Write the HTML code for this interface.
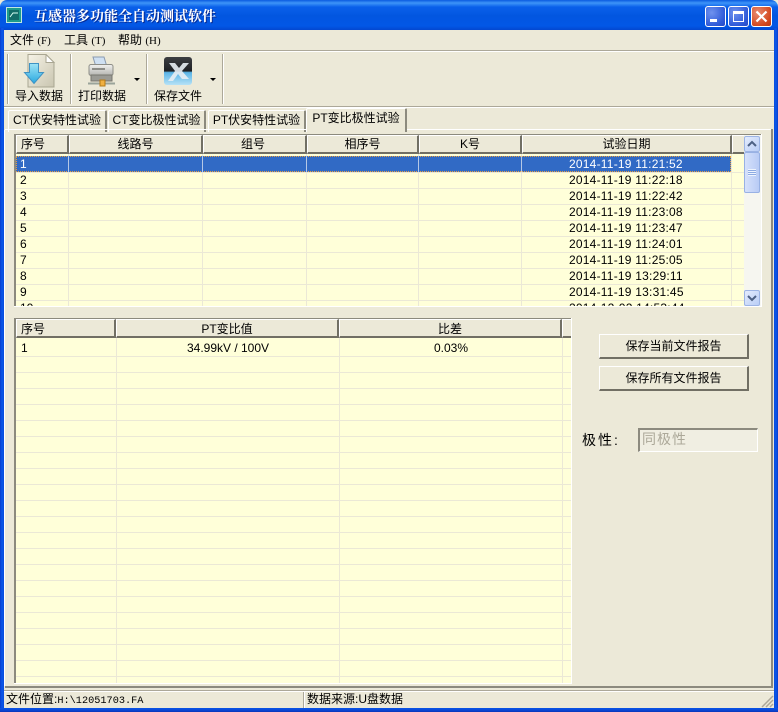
<!DOCTYPE html>
<html><head><meta charset="utf-8">
<style>
html,body{margin:0;padding:0;width:778px;height:712px;overflow:hidden;background:#ece9d8}
*{box-sizing:border-box}
body{position:relative;font:12px/16px "Liberation Sans","WenQuanYi Zen Hei","Noto Sans CJK SC",sans-serif;color:#000}
.a{position:absolute}
.t{position:absolute;white-space:nowrap}
.d{letter-spacing:.22px}
.title{left:0;top:0;width:778px;height:30px;background:linear-gradient(180deg,#0a5be0 0,#3e95f8 3px,#0a60ea 7px,#0256e0 16px,#0257e6 26px,#0347d0 30px);border-radius:7px 7px 0 0}
.hd{position:absolute;background:#ece9d8;border-top:1px solid #fff;border-left:1px solid #fff;border-right:2px solid #716f64;border-bottom:2px solid #716f64;text-align:center;line-height:17px;height:19px}
.grid{position:absolute;background:#ffffd9;overflow:hidden;border-left:2px solid #8c8a7e;border-top:1px solid #8c8a7e}
.hl{position:absolute;left:0;right:0;height:1px;background:#ebe8d6}
.vl{position:absolute;top:0;bottom:0;width:1px;background:#ebe8d6}
.tab{position:absolute;background:#ece9d8;border-top:1px solid #fff;border-left:1px solid #fff;border-right:2px solid #8c8a7e;text-align:center;line-height:19px;height:22px;border-radius:2px 2px 0 0}
.btn{position:absolute;background:#ece9d8;border-top:1px solid #fff;border-left:1px solid #fff;border-right:2px solid #716f64;border-bottom:2px solid #716f64;text-align:center;line-height:22px;width:150px;height:25px;font-size:12px}
.sep{position:absolute;width:1px;top:54px;height:50px;background:#aca899;border-right:1px solid #fff;width:2px}
.wb{position:absolute;top:6px;width:21px;height:21px;border:1px solid #fff;border-radius:3px;background:radial-gradient(circle at 30% 30%,#6f92ee,#2f5ad8 70%,#2549c4)}
.m{font:11px/16px "Liberation Serif",serif}
</style></head><body>
<div class="a title"></div>
<div class="a" style="left:0;top:28px;width:4px;height:684px;background:linear-gradient(90deg,#0a3ccc,#0a58ea 50%,#0a4cdc)"></div>
<div class="a" style="left:774px;top:28px;width:4px;height:684px;background:linear-gradient(90deg,#0a4cdc,#0a58ea 50%,#0a3ccc)"></div>
<div class="a" style="left:0;top:708px;width:778px;height:4px;background:linear-gradient(180deg,#0a55e6,#0a48d8 50%,#0a36b8)"></div>

<div class="a" style="left:6px;top:7px;width:16px;height:16px;background:#1d9b8c;border:1px solid #bfe8e0"><svg width="14" height="14" style="display:block"><rect x="2" y="2" width="10" height="10" fill="#126c68"/><path d="M3 9 L6 5 L11 5" stroke="#d8fff4" fill="none"/></svg></div>
<div class="t" style="left:34px;top:7px;color:#fff;font:bold 14px/18px 'Noto Serif CJK SC','Liberation Serif',serif;text-shadow:1px 1px 0 #0a2a90">互感器多功能全自动测试软件</div>

<div class="wb" style="left:705px"><div class="a" style="left:4px;top:12px;width:7px;height:3px;background:#fff"></div></div>
<div class="wb" style="left:728px"><div class="a" style="left:4px;top:4px;width:11px;height:11px;border:1px solid #fff;border-top:3px solid #fff"></div></div>
<div class="wb" style="left:751px;background:radial-gradient(circle at 30% 30%,#e88a70,#d4481e 70%,#b83a14)"><svg width="19" height="19" style="display:block"><path d="M4.5 4.5 L14.5 14.5 M14.5 4.5 L4.5 14.5" stroke="#fff" stroke-width="2.2"/></svg></div>

<!-- menu -->
<div class="t" style="left:10px;top:32px">文件 <span class="m">(F)</span></div>
<div class="t" style="left:64px;top:32px">工具 <span class="m">(T)</span></div>
<div class="t" style="left:118px;top:32px">帮助 <span class="m">(H)</span></div>
<div class="a" style="left:4px;top:50px;width:770px;height:1px;background:#aca899"></div>
<div class="a" style="left:4px;top:51px;width:770px;height:1px;background:#fff"></div>

<!-- toolbar -->
<div class="sep" style="left:7px"></div>
<div class="sep" style="left:70px"></div>
<div class="sep" style="left:146px"></div>
<div class="sep" style="left:222px"></div>
<svg class="a" style="left:22px;top:54px" width="34" height="34">
<defs><linearGradient id="pg" x1="0" x2="1" y1="0" y2="1"><stop offset="0" stop-color="#f6f3e6"/><stop offset="1" stop-color="#c9c5b0"/></linearGradient>
<linearGradient id="ar" x1="0" x2="0" y1="0" y2="1"><stop offset="0" stop-color="#9fe4f6"/><stop offset="1" stop-color="#28a8e0"/></linearGradient></defs>
<path d="M6 0.5 H24 L32 8.5 V33 H6 Z" fill="url(#pg)" stroke="#a9a692"/>
<path d="M24 0.5 V8.5 H32 Z" fill="#fff" stroke="#a9a692"/>
<path d="M7.5 9.5 H16.5 V18.5 H21.5 L12 29.5 L2.5 18.5 H7.5 Z" fill="url(#ar)" stroke="#3f93c4"/>
</svg>
<svg class="a" style="left:87px;top:56px" width="30" height="32">
<defs><linearGradient id="pb" x1="0" x2="0" y1="0" y2="1"><stop offset="0" stop-color="#f2f2f0"/><stop offset="1" stop-color="#b4b4b0"/></linearGradient></defs>
<path d="M6 1 H17 L20 11 H9 Z" fill="#cfe0f2" stroke="#8a9ab0"/>
<rect x="2" y="8.5" width="24" height="11" rx="2" fill="url(#pb)" stroke="#8e8e88"/>
<rect x="4" y="19" width="21" height="6" fill="#9a9a94" stroke="#77776f"/>
<rect x="5" y="12" width="13" height="2" fill="#8d8d88"/>
<path d="M1 27.5 H28" stroke="#9aa49a" stroke-width="2"/>
<rect x="13" y="24" width="5" height="6" fill="#f0b040" stroke="#b57a18"/>
</svg>
<svg class="a" style="left:164px;top:57px" width="28" height="28">
<defs><linearGradient id="xg" x1="0" x2="0" y1="0" y2="1"><stop offset="0" stop-color="#3c3e42"/><stop offset=".5" stop-color="#1e2024"/><stop offset=".55" stop-color="#5ab4e6"/><stop offset="1" stop-color="#b6e2f6"/></linearGradient></defs>
<rect x="0" y="0" width="28" height="28" rx="3" fill="url(#xg)"/>
<path d="M5 6 H11 L15 11 L19 6 H25 L18 14 L25 22 H18 L14 17 L9 24 H4 L11 14 Z" fill="#e8eef4" opacity=".9"/>
</svg>
<div class="t" style="left:15px;top:88px">导入数据</div>
<div class="t" style="left:78px;top:88px">打印数据</div>
<div class="t" style="left:154px;top:88px">保存文件</div>
<div class="a" style="left:134px;top:78px;border:3px solid transparent;border-top:3px solid #000;border-bottom:0"></div>
<div class="a" style="left:210px;top:78px;border:3px solid transparent;border-top:3px solid #000;border-bottom:0"></div>
<div class="a" style="left:4px;top:106px;width:770px;height:1px;background:#aca899"></div>
<div class="a" style="left:4px;top:107px;width:770px;height:1px;background:#fff"></div>

<!-- tabs -->
<div class="tab" style="left:8px;top:110px;width:99px">CT伏安特性试验</div>
<div class="tab" style="left:108px;top:110px;width:98px">CT变比极性试验</div>
<div class="tab" style="left:208px;top:110px;width:98px">PT伏安特性试验</div>
<div class="tab" style="left:306px;top:108px;width:101px;height:24px;z-index:2">PT变比极性试验</div>
<div class="a" style="left:5px;top:129px;width:766px;height:1px;background:#fff"></div>
<div class="a" style="left:4px;top:130px;width:1px;height:556px;background:#fff"></div>
<div class="a" style="left:771px;top:129px;width:2px;height:559px;background:#8c8a7e"></div>
<div class="a" style="left:5px;top:686px;width:768px;height:2px;background:#8c8a7e"></div>

<!-- top grid -->
<div class="grid" style="left:14px;top:134px;width:748px;height:172px">
 <div class="vl" style="left:52px"></div><div class="vl" style="left:186px"></div><div class="vl" style="left:290px"></div><div class="vl" style="left:402px"></div><div class="vl" style="left:505px"></div><div class="vl" style="left:715px"></div>
 <div class="hl" style="top:37px"></div><div class="hl" style="top:53px"></div><div class="hl" style="top:69px"></div><div class="hl" style="top:85px"></div><div class="hl" style="top:101px"></div><div class="hl" style="top:117px"></div><div class="hl" style="top:133px"></div><div class="hl" style="top:149px"></div><div class="hl" style="top:165px"></div>
 <div class="a" style="left:0;top:21px;width:715px;height:16px;background:#316ac5;outline:1px dotted #e8a040;outline-offset:-1px"></div>
 <div class="vl" style="left:52px;top:21px;height:16px;bottom:auto;background:#b5c8e6"></div><div class="vl" style="left:186px;top:21px;height:16px;bottom:auto;background:#b5c8e6"></div><div class="vl" style="left:290px;top:21px;height:16px;bottom:auto;background:#b5c8e6"></div><div class="vl" style="left:402px;top:21px;height:16px;bottom:auto;background:#b5c8e6"></div><div class="vl" style="left:505px;top:21px;height:16px;bottom:auto;background:#b5c8e6"></div>
 <div class="hd" style="left:0;top:0;width:53px;text-align:left;padding-left:4px">序号</div>
 <div class="hd" style="left:53px;top:0;width:134px">线路号</div>
 <div class="hd" style="left:187px;top:0;width:104px;padding-right:3px">组号</div>
 <div class="hd" style="left:291px;top:0;width:112px">相序号</div>
 <div class="hd" style="left:403px;top:0;width:103px">K号</div>
 <div class="hd" style="left:506px;top:0;width:210px">试验日期</div>
 <div class="hd" style="left:716px;top:0;width:12px;border-right:0"></div>
 <div class="t" style="left:4px;top:21px;color:#fff">1</div><div class="t d" style="left:553px;top:21px;color:#fff">2014-11-19 11:21:52</div>
 <div class="t" style="left:4px;top:37px">2</div><div class="t d" style="left:553px;top:37px">2014-11-19 11:22:18</div>
 <div class="t" style="left:4px;top:53px">3</div><div class="t d" style="left:553px;top:53px">2014-11-19 11:22:42</div>
 <div class="t" style="left:4px;top:69px">4</div><div class="t d" style="left:553px;top:69px">2014-11-19 11:23:08</div>
 <div class="t" style="left:4px;top:85px">5</div><div class="t d" style="left:553px;top:85px">2014-11-19 11:23:47</div>
 <div class="t" style="left:4px;top:101px">6</div><div class="t d" style="left:553px;top:101px">2014-11-19 11:24:01</div>
 <div class="t" style="left:4px;top:117px">7</div><div class="t d" style="left:553px;top:117px">2014-11-19 11:25:05</div>
 <div class="t" style="left:4px;top:133px">8</div><div class="t d" style="left:553px;top:133px">2014-11-19 13:29:11</div>
 <div class="t" style="left:4px;top:149px">9</div><div class="t d" style="left:553px;top:149px">2014-11-19 13:31:45</div>
 <div class="t" style="left:4px;top:165px">10</div><div class="t d" style="left:553px;top:165px">2014-12-02 14:53:44</div>
 <!-- scrollbar -->
 <div class="a" style="left:728px;top:0;width:18px;height:172px;background:#f6f6f0"></div>
 <div class="a" style="left:728px;top:1px;width:16px;height:16px;background:linear-gradient(135deg,#e4ecfd,#b9cdf6);border:1px solid #9db4e4;border-radius:2px"><svg width="14" height="14" style="display:block"><path d="M3 9 L7 5 L11 9" stroke="#4d6185" stroke-width="2" fill="none"/></svg></div>
 <div class="a" style="left:728px;top:17px;width:16px;height:41px;background:linear-gradient(90deg,#d6e1fb,#b8cbf5);border:1px solid #98b1e4;border-radius:2px"><div class="a" style="left:3px;top:16px;width:8px;height:7px;background:repeating-linear-gradient(180deg,#eef4fe 0,#eef4fe 1px,#8daae2 1px,#8daae2 2px)"></div></div>
 <div class="a" style="left:728px;top:155px;width:16px;height:16px;background:linear-gradient(135deg,#e4ecfd,#b9cdf6);border:1px solid #9db4e4;border-radius:2px"><svg width="14" height="14" style="display:block"><path d="M3 5 L7 9 L11 5" stroke="#4d6185" stroke-width="2" fill="none"/></svg></div>
</div>
<div class="a" style="left:14px;top:306px;width:748px;height:1px;background:#fff"></div>
<div class="a" style="left:761px;top:134px;width:1px;height:172px;background:#fff"></div>

<!-- bottom grid -->
<div class="grid" style="left:14px;top:318px;width:558px;height:365px">
 <div class="vl" style="left:100px"></div><div class="vl" style="left:323px"></div><div class="vl" style="left:546px"></div>
 <div class="hl" style="top:37px"></div><div class="hl" style="top:53px"></div><div class="hl" style="top:69px"></div><div class="hl" style="top:85px"></div><div class="hl" style="top:101px"></div><div class="hl" style="top:117px"></div><div class="hl" style="top:133px"></div><div class="hl" style="top:149px"></div><div class="hl" style="top:165px"></div><div class="hl" style="top:181px"></div><div class="hl" style="top:197px"></div><div class="hl" style="top:213px"></div><div class="hl" style="top:229px"></div><div class="hl" style="top:245px"></div><div class="hl" style="top:261px"></div><div class="hl" style="top:277px"></div><div class="hl" style="top:293px"></div><div class="hl" style="top:309px"></div><div class="hl" style="top:325px"></div><div class="hl" style="top:341px"></div><div class="hl" style="top:357px"></div>
 <div class="hd" style="left:0;top:0;width:100px;text-align:left;padding-left:4px;line-height:18px">序号</div>
 <div class="hd" style="left:100px;top:0;width:223px;line-height:18px">PT变比值</div>
 <div class="hd" style="left:323px;top:0;width:223px;line-height:18px">比差</div>
 <div class="hd" style="left:546px;top:0;width:10px;border-right:0"></div>
 <div class="t" style="left:5px;top:21px">1</div>
 <div class="t" style="left:101px;top:21px;width:222px;text-align:center">34.99kV / 100V</div>
 <div class="t" style="left:324px;top:21px;width:222px;text-align:center">0.03%</div>
</div>
<div class="a" style="left:571px;top:318px;width:1px;height:366px;background:#fff"></div>
<div class="a" style="left:14px;top:683px;width:558px;height:1px;background:#fff"></div>

<!-- right -->
<div class="btn" style="left:599px;top:334px">保存当前文件报告</div>
<div class="btn" style="left:599px;top:366px">保存所有文件报告</div>
<div class="t" style="left:582px;top:431px;font-size:14px;line-height:18px;letter-spacing:2px">极性:</div>
<div class="a" style="left:638px;top:428px;width:120px;height:24px;background:#f0eee2;border-top:2px solid #8c8a7e;border-left:2px solid #8c8a7e;border-right:1px solid #fff;border-bottom:1px solid #fff;color:#aca899;font-size:14px;line-height:18px;padding-left:2px;letter-spacing:1px">同极性</div>

<!-- status -->
<div class="a" style="left:4px;top:690px;width:770px;height:1px;background:#aca899"></div>
<div class="a" style="left:4px;top:691px;width:770px;height:1px;background:#fff"></div>
<div class="a" style="left:303px;top:692px;width:1px;height:16px;background:#aca899"></div>
<div class="a" style="left:304px;top:692px;width:1px;height:16px;background:#fff"></div>
<div class="t" style="left:6px;top:691px">文件位置:<span style="font:10.25px/16px 'Liberation Mono',monospace">H:\12051703.FA</span></div>
<div class="t" style="left:307px;top:691px">数据来源:U盘数据</div>
<svg class="a" style="left:761px;top:695px" width="13" height="13"><path d="M12 1 L1 12 M12 5 L5 12 M12 9 L9 12" stroke="#aca899" stroke-width="1.5"/></svg>
</body></html>
